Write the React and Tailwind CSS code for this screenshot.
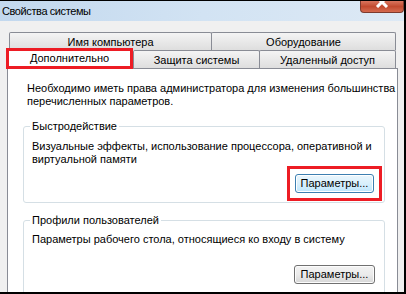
export default function App() {
  return (
    <div className="w-[406px] h-[294px] overflow-hidden bg-[#f0f0f0] border-t border-r-2 border-b-2 border-black font-['Liberation_Sans',Arial,sans-serif] text-[11px] leading-[13px] text-black whitespace-nowrap">
      {/* title bar */}
      <div className="h-[20px] flex justify-between bg-gradient-to-r from-[#c2d8ee] via-[#d2e3f3] to-[#dde9f5]">
        <div className="pl-[2px] pt-[3px] text-[11px] leading-[14px] tracking-[-0.4px]">
          Свойства системы
        </div>
        <div className="w-[44px] h-[12px] rounded-b-[4px] border border-t-0 border-[#7d3a2e] bg-gradient-to-b from-[#d9755e] via-[#c24a2f] to-[#d56a4f] flex justify-center overflow-hidden">
          <svg width="14" height="12" viewBox="0 0 14 12" className="-mt-[5px]">
            <path d="M2 1 L12 11 M12 1 L2 11" stroke="#ffffff" strokeWidth="3" />
          </svg>
        </div>
      </div>

      <div className="pt-[11px]">
        {/* back row of tabs */}
        <div className="flex ml-[9px]">
          <div className="w-[203px] h-[18px] border border-b-0 border-[#898c95] rounded-t-[2px] bg-gradient-to-b from-[#f4f4f4] to-[#dedede] text-center leading-[18px]">
            Имя компьютера
          </div>
          <div className="w-[185px] h-[18px] -ml-px border border-b-0 border-[#898c95] rounded-t-[2px] bg-gradient-to-b from-[#f4f4f4] to-[#dedede] text-center leading-[18px]">
            Оборудование
          </div>
        </div>

        {/* front row of tabs */}
        <div className="flex ml-[6px] h-[18px]">
          <div className="relative z-10 -mt-[2px] w-[127px] h-[21px] border-[3px] border-[#ed1c24] bg-white text-center leading-[14px]">
            Дополнительно
          </div>
          <div className="w-[127px] h-[18px] border border-b-0 border-[#898c95] rounded-t-[2px] bg-gradient-to-b from-[#f4f4f4] to-[#dedede] text-center leading-[18px]">
            Защита системы
          </div>
          <div className="w-[137px] h-[18px] -ml-px border border-b-0 border-[#898c95] rounded-t-[2px] bg-gradient-to-b from-[#f4f4f4] to-[#dedede] text-center leading-[18px]">
            Удаленный доступ
          </div>
        </div>

        {/* panel */}
        <div className="ml-[7px] w-[391px] h-[240px] border border-[#898c95] bg-white pt-[13px]">
          <p className="pl-[19px]">
            Необходимо иметь права администратора для изменения большинства
            <br />
            перечисленных параметров.
          </p>

          <fieldset className="ml-[15px] mt-[12px] w-[362px] border border-[#d5dfe5] rounded-[3px]">
            <legend className="ml-[6px] px-[2px]">Быстродействие</legend>
            <div className="pl-[8px] pt-[7px]">
              Визуальные эффекты, использование процессора, оперативной и
              <br />
              виртуальной памяти
            </div>
            <div className="flex justify-end pr-[2px] pb-[1px]">
              <div className="border-[3px] border-[#ed1c24] pl-[5px] pr-[5px] pt-[5px] pb-[5px]">
                <button className="w-[79px] h-[19px] rounded-[3px] border border-[#3c7fb1] bg-gradient-to-b from-[#eaf6fd] via-[#d9f0fc] to-[#bee6fd] shadow-[inset_0_0_0_1px_#ffffff]">
                  Параметры...
                </button>
              </div>
            </div>
          </fieldset>

          <fieldset className="ml-[15px] mt-[11px] w-[362px] border border-[#d5dfe5] rounded-[3px]">
            <legend className="ml-[6px] px-[2px]">Профили пользователей</legend>
            <div className="pl-[8px] pt-[6px]">
              Параметры рабочего стола, относящиеся ко входу в систему
            </div>
            <div className="flex justify-end pr-[9px] pt-[19px] pb-[20px]">
              <button className="w-[81px] h-[19px] rounded-[3px] border border-[#707070] bg-gradient-to-b from-[#f2f2f2] via-[#ebebeb] to-[#d6d6d6] shadow-[inset_0_0_0_1px_#fcfcfc]">
                Параметры...
              </button>
            </div>
          </fieldset>
        </div>
      </div>
    </div>
  );
}
